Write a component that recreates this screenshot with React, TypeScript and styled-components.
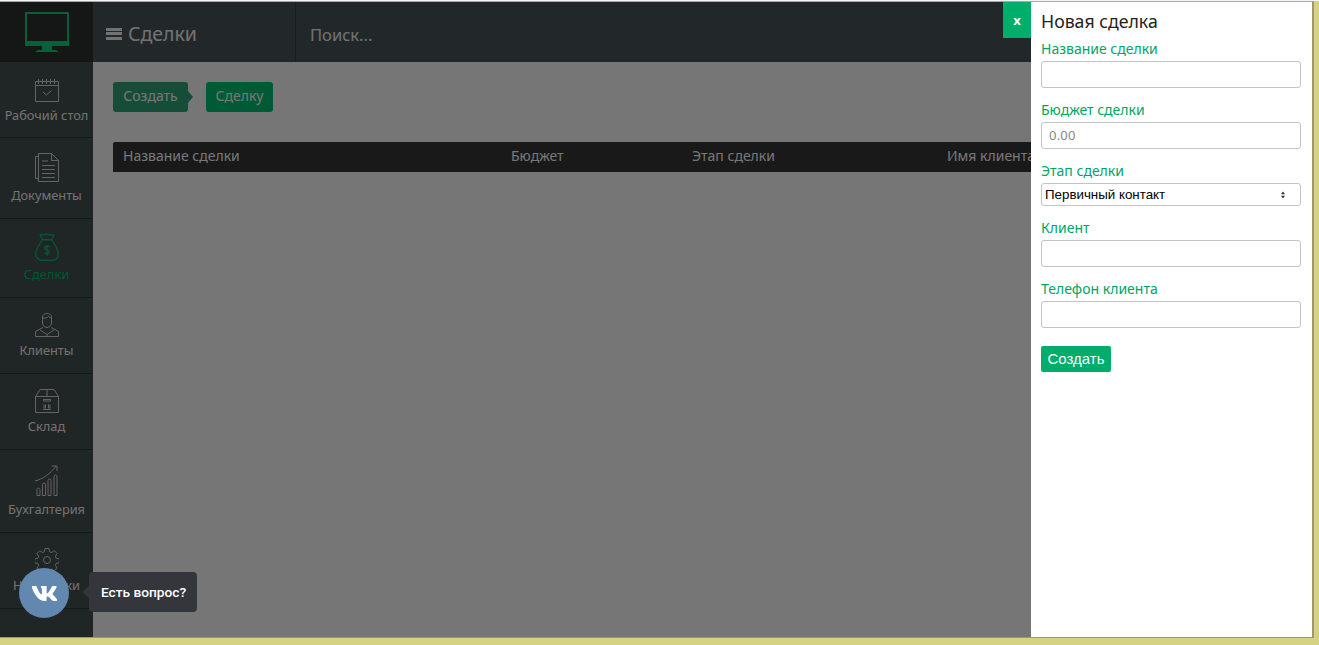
import React from "react";
import styled, { createGlobalStyle } from "styled-components";
import { FaVk } from "react-icons/fa";

const GlobalStyle = createGlobalStyle`
  html, body {
    margin: 0;
    padding: 0;
    height: 100%;
    overflow: hidden;
    background: #d6d284;
  }
  * {
    box-sizing: border-box;
  }
`;

const FONT = `"Noto Sans", "Open Sans", sans-serif`;

const Page = styled.div`
  width: 1319px;
  height: 645px;
  border-top: 1px solid #f4f4f4;
  background: #d6d284;
  font-family: ${FONT};
`;

const Frame = styled.div`
  position: relative;
  display: flex;
  width: 1314px;
  height: 637px;
  overflow: hidden;
  background: #ececec;
  border-top: 1px solid #a8a8a8;
  border-right: 2px solid #9c9a68;
  border-bottom: 1px solid #9c9a68;
`;

const Sidebar = styled.nav`
  width: 93px;
  flex-shrink: 0;
  background: #404a4c;
`;

const LogoBox = styled.div`
  height: 60px;
  padding-top: 10px;
  display: flex;
  justify-content: center;
  background: #2a2e2e;
  color: #00c573;
`;

const NavItem = styled.div<{ $active?: boolean; $top: number; $bottom: number }>`
  display: flex;
  flex-direction: column;
  align-items: center;
  padding: ${(p) => p.$top}px 0 ${(p) => p.$bottom}px;
  border-bottom: 1px solid #2c3234;
  color: ${(p) => (p.$active ? "#00ae66" : "#c8c8c8")};
`;

const NavLabel = styled.span<{ $active?: boolean }>`
  margin-top: 4px;
  font-size: 12.8px;
  line-height: 18px;
  white-space: nowrap;
  color: ${(p) => (p.$active ? "#00ae66" : "#e4e4e4")};
`;

const Main = styled.div`
  flex: 1;
  min-width: 0;
`;

const Header = styled.header`
  height: 60px;
  display: flex;
  align-items: center;
  background: #444f53;
`;

const HeaderTitle = styled.div`
  width: 203px;
  height: 100%;
  padding: 3px 0 0 13px;
  display: flex;
  align-items: center;
  gap: 6px;
  border-right: 1px solid #343c3f;
  font-size: 19.5px;
  color: #e4e4e4;
`;

const Burger = styled.span`
  width: 16px;
  height: 12px;
  border-top: 3px solid #e4e4e4;
  border-bottom: 3px solid #e4e4e4;
  &::after {
    content: "";
    display: block;
    height: 3px;
    margin-top: 1.5px;
    background: #e4e4e4;
  }
`;

const Search = styled.input`
  margin: 4px 0 0 12px;
  width: 400px;
  border: none;
  outline: none;
  background: transparent;
  font-family: ${FONT};
  font-size: 16.5px;
  &::placeholder {
    color: #e4e4e4;
    opacity: 1;
  }
`;

const Content = styled.main`
  padding: 20px;
`;

const Steps = styled.div`
  display: flex;
  gap: 18px;
  margin-bottom: 30px;
`;

const Step = styled.div<{ $arrow?: boolean; $width: number }>`
  position: relative;
  width: ${(p) => p.$width}px;
  height: 30px;
  padding-bottom: 3px;
  display: flex;
  align-items: center;
  justify-content: center;
  border-radius: 3px;
  font-size: 14px;
  color: #eeeeee;
  background: ${(p) => (p.$arrow ? "#2a9a70" : "#00b46a")};
  ${(p) =>
    p.$arrow &&
    `&::after {
      content: "";
      position: absolute;
      left: 100%;
      top: 9px;
      border-left: 5px solid #2a9a70;
      border-top: 6px solid transparent;
      border-bottom: 6px solid transparent;
    }`}
`;

const TableHead = styled.div`
  height: 30px;
  display: grid;
  grid-template-columns: 388px 181px 255px 1fr;
  align-items: center;
  padding: 0 0 3px 10px;
  background: #323232;
  font-size: 14px;
  color: #eeeeee;
  border-radius: 2px 0 0 0;
`;

const Dim = styled.div`
  position: absolute;
  inset: 0;
  background: rgba(0, 0, 0, 0.5);
`;

const Panel = styled.aside`
  position: absolute;
  top: 0;
  right: 0;
  bottom: 0;
  width: 281px;
  padding: 8px 11px 0 10px;
  background: #ffffff;
`;

const CloseBtn = styled.button`
  position: absolute;
  top: 0;
  right: 281px;
  width: 28px;
  height: 36px;
  border: none;
  padding: 0;
  background: #00ad6b;
  color: #ffffff;
  font-family: ${FONT};
  font-size: 13px;
  font-weight: 700;
`;

const PanelTitle = styled.h2`
  margin: 0 0 7px;
  font-size: 17.7px;
  font-weight: 400;
  line-height: 22px;
  color: #222222;
`;

const Field = styled.div`
  margin-bottom: 12px;
`;

const FieldLabel = styled.label`
  display: block;
  font-size: 14px;
  line-height: 20px;
  margin-bottom: 2px;
  color: #00a566;
`;

const TextInput = styled.input`
  display: block;
  width: 100%;
  height: 27px;
  padding: 0 7px 1px;
  border: 1px solid #c4c4c4;
  border-radius: 3px;
  outline: none;
  background: #ffffff;
  font-family: ${FONT};
  font-size: 13px;
  letter-spacing: 0.2px;
  &::placeholder {
    color: #888888;
    opacity: 1;
  }
`;

const SelectWrap = styled.div`
  position: relative;
  height: 23px;
`;

const Select = styled.select`
  display: block;
  width: 100%;
  height: 23px;
  padding: 0 3px;
  appearance: none;
  border: 1px solid #c4c4c4;
  border-radius: 3px;
  outline: none;
  background: #ffffff;
  font-family: "Liberation Sans", Arial, sans-serif;
  font-size: 13.33px;
  color: #000000;
`;

const SelectArrows = styled.svg`
  position: absolute;
  top: 8px;
  right: 16px;
  width: 4px;
  height: 8px;
  pointer-events: none;
`;

const SubmitBtn = styled.button`
  display: block;
  margin-top: 18px;
  width: 70px;
  height: 26px;
  padding: 0 0 2px;
  border: none;
  border-radius: 2px;
  background: #00ad6b;
  color: #ffffff;
  font-family: "Liberation Sans", Arial, sans-serif;
  font-size: 15px;
`;

const VkWidget = styled.div`
  position: absolute;
  left: 19px;
  top: 566px;
  display: flex;
  align-items: center;
  gap: 20px;
`;

const VkCircle = styled.div`
  width: 50px;
  height: 50px;
  border-radius: 50%;
  display: flex;
  align-items: center;
  justify-content: center;
  background: #6288b0;
  color: #ffffff;
  font-size: 27px;
`;

const VkHint = styled.div`
  position: relative;
  height: 40px;
  margin-bottom: 2px;
  width: 108px;
  padding-left: 12px;
  display: flex;
  align-items: center;
  border-radius: 4px;
  background: #35363b;
  color: #ffffff;
  font-family: Roboto, sans-serif;
  font-weight: 500;
  font-size: 13.7px;
  &::before {
    content: "";
    position: absolute;
    right: 100%;
    top: 14px;
    border-right: 7px solid #35363b;
    border-top: 6px solid transparent;
    border-bottom: 6px solid transparent;
  }
`;

const LogoIcon = () => (
  <svg width="44" height="40" viewBox="0 0 44 40" fill="currentColor">
    <path fillRule="evenodd" d="M0 0h44v34H0zM2 2v27h40V2z" />
    <path d="M17 34h10v4h4l3 2H10l3-2h4z" />
  </svg>
);

const CalendarIcon = () => (
  <svg width="24" height="24" viewBox="0 0 24 24" fill="none" stroke="currentColor" strokeWidth="1">
    <path d="M.5 3.500h23v20H.5zM.5 7.500h23" />
    <path d="M3.500 1v5M7.500 1v5M11.500 1v5M15.500 1v5M19.500 1v5" />
    <path d="M8 14l3.500 3L16.500 12.500" />
  </svg>
);

const DocIcon = () => (
  <svg width="24" height="29" viewBox="0 0 24 29" fill="none" stroke="currentColor" strokeWidth="1">
    <path d="M3.500 3.500H.5v22h3" />
    <path d="M3.500.5h13l7 7v21h-20zM16.500.5v7h7" />
    <path d="M7 8h6M7 12.500h13M7 16.500h13M7 20.500h13M7 24.500h13" />
  </svg>
);

const BagIcon = () => (
  <svg width="24" height="28" viewBox="0 0 24 27" fill="none" stroke="currentColor" strokeWidth="1.4" preserveAspectRatio="none">
    <path d="M7.500 6.500L5 2c2-1.500 3 .3 4.500-.3 1.500-.8 3-1 4.500 0 1.500.7 3-.8 5 .3l-2.500 4.500" />
    <path d="M7.500 6.500h9c3 4 6.800 9 6.800 13.500 0 4-2.500 6.300-6 6.300H7c-3.500 0-6.300-2.300-6.300-6.300C.7 15.500 4.500 10.500 7.500 6.500z" />
    <path d="M14.500 13.500c-1-1.300-5-1.300-5 1 0 2.400 5 1.200 5 3.600 0 2.300-4 2.300-5.200 1M12 11.500v10.500" />
  </svg>
);

const ClientIcon = () => (
  <svg width="24" height="24" viewBox="0 0 24 24" fill="none" stroke="currentColor" strokeWidth="1">
    <path d="M7.500 4c0-2.200 2-3.500 4.500-3.500s4.500 1.300 4.500 3.500v6c0 2.500-2 4.500-4.500 4.500S7.500 12.500 7.500 10z" />
    <path d="M7.500 5c2 .5 5-.3 6-1.800.5 1.300 1.500 1.800 3 1.800" />
    <path d="M8 14.500L.5 18.500v5h23v-5L16 14.500" />
    <path d="M5 17l7 4.500 7-4.500M12 21.500v2" />
  </svg>
);

const BoxIcon = () => (
  <svg width="24" height="24" viewBox="0 0 24 24" fill="none" stroke="currentColor" strokeWidth="1">
    <path d="M.5 7.500h23v16H.5zM.5 7.500L5 .5h14l4.500 7M12 .5v7" />
    <path d="M8.500 10.500h7v1.500h-7zM9 15.500v4M10.500 15.500v4M13.500 15.500v4M15 15.500v4M8 20.500h8" />
  </svg>
);

const ChartIcon = () => (
  <svg width="24" height="31" viewBox="0 0 24 31" fill="none" stroke="currentColor" strokeWidth="1">
    <path d="M2 24.500a1 1 0 0 1 3 0v6H2zM7.500 19.500a1 1 0 0 1 3 0v11h-3zM13 15.500a1 1 0 0 1 3 0v15h-3zM19 11.500a1 1 0 0 1 3 0v19h-3z" />
    <path d="M0 16c8-2 15-7 21-15M16.500 1H22v5" />
  </svg>
);

const GearIcon = () => (
  <svg width="24" height="24" viewBox="0 0 24 24" fill="none" stroke="currentColor" strokeWidth="1">
    <circle cx="12" cy="12" r="3.500" />
    <path d="M10 .5h4l.6 3.200 2 .8 2.700-1.800 2.800 2.800-1.800 2.700.8 2 3.200.6v4l-3.200.6-.8 2 1.800 2.700-2.800 2.800-2.700-1.800-2 .8-.6 3.200h-4l-.6-3.200-2-.8-2.700 1.800-2.800-2.800 1.800-2.700-.8-2-3.200-.6v-4l3.200-.6.800-2-1.800-2.700 2.800-2.800 2.700 1.800 2-.8z" />
  </svg>
);

const NAV = [
  { label: "Рабочий стол", Icon: CalendarIcon, top: 16, bottom: 13 },
  { label: "Документы", Icon: DocIcon, top: 15, bottom: 14 },
  { label: "Сделки", Icon: BagIcon, top: 14, bottom: 14, active: true },
  { label: "Клиенты", Icon: ClientIcon, top: 15, bottom: 14 },
  { label: "Склад", Icon: BoxIcon, top: 15, bottom: 14 },
  { label: "Бухгалтерия", Icon: ChartIcon, top: 15, bottom: 14 },
  { label: "Настройки", Icon: GearIcon, top: 15, bottom: 14 },
];

const FormField = ({ label, placeholder }: { label: string; placeholder?: string }) => (
  <Field>
    <FieldLabel>{label}</FieldLabel>
    <TextInput placeholder={placeholder} />
  </Field>
);

export default function App() {
  return (
    <>
      <GlobalStyle />
      <Page>
        <Frame>
          <Sidebar>
            <LogoBox>
              <LogoIcon />
            </LogoBox>
            {NAV.map(({ label, Icon, top, bottom, active }) => (
              <NavItem key={label} $active={active} $top={top} $bottom={bottom}>
                <Icon />
                <NavLabel $active={active}>{label}</NavLabel>
              </NavItem>
            ))}
          </Sidebar>
          <Main>
            <Header>
              <HeaderTitle>
                <Burger />
                Сделки
              </HeaderTitle>
              <Search placeholder="Поиск..." />
            </Header>
            <Content>
              <Steps>
                <Step $arrow $width={75}>Создать</Step>
                <Step $width={67}>Сделку</Step>
              </Steps>
              <TableHead>
                <span>Название сделки</span>
                <span>Бюджет</span>
                <span>Этап сделки</span>
                <span>Имя клиента</span>
              </TableHead>
            </Content>
          </Main>
          <Dim />
          <CloseBtn>x</CloseBtn>
          <Panel>
            <PanelTitle>Новая сделка</PanelTitle>
            <FormField label="Название сделки" />
            <FormField label="Бюджет сделки" placeholder="0.00" />
            <Field>
              <FieldLabel>Этап сделки</FieldLabel>
              <SelectWrap>
                <Select defaultValue="first">
                  <option value="first">Первичный контакт</option>
                </Select>
                <SelectArrows viewBox="0 0 5 9" fill="#333333">
                  <path d="M2.500 0L5 3.500H0zM2.500 9L0 5.500h5z" />
                </SelectArrows>
              </SelectWrap>
            </Field>
            <FormField label="Клиент" />
            <FormField label="Телефон клиента" />
            <SubmitBtn>Создать</SubmitBtn>
          </Panel>
          <VkWidget>
            <VkCircle>
              <FaVk />
            </VkCircle>
            <VkHint>Есть вопрос?</VkHint>
          </VkWidget>
        </Frame>
      </Page>
    </>
  );
}
